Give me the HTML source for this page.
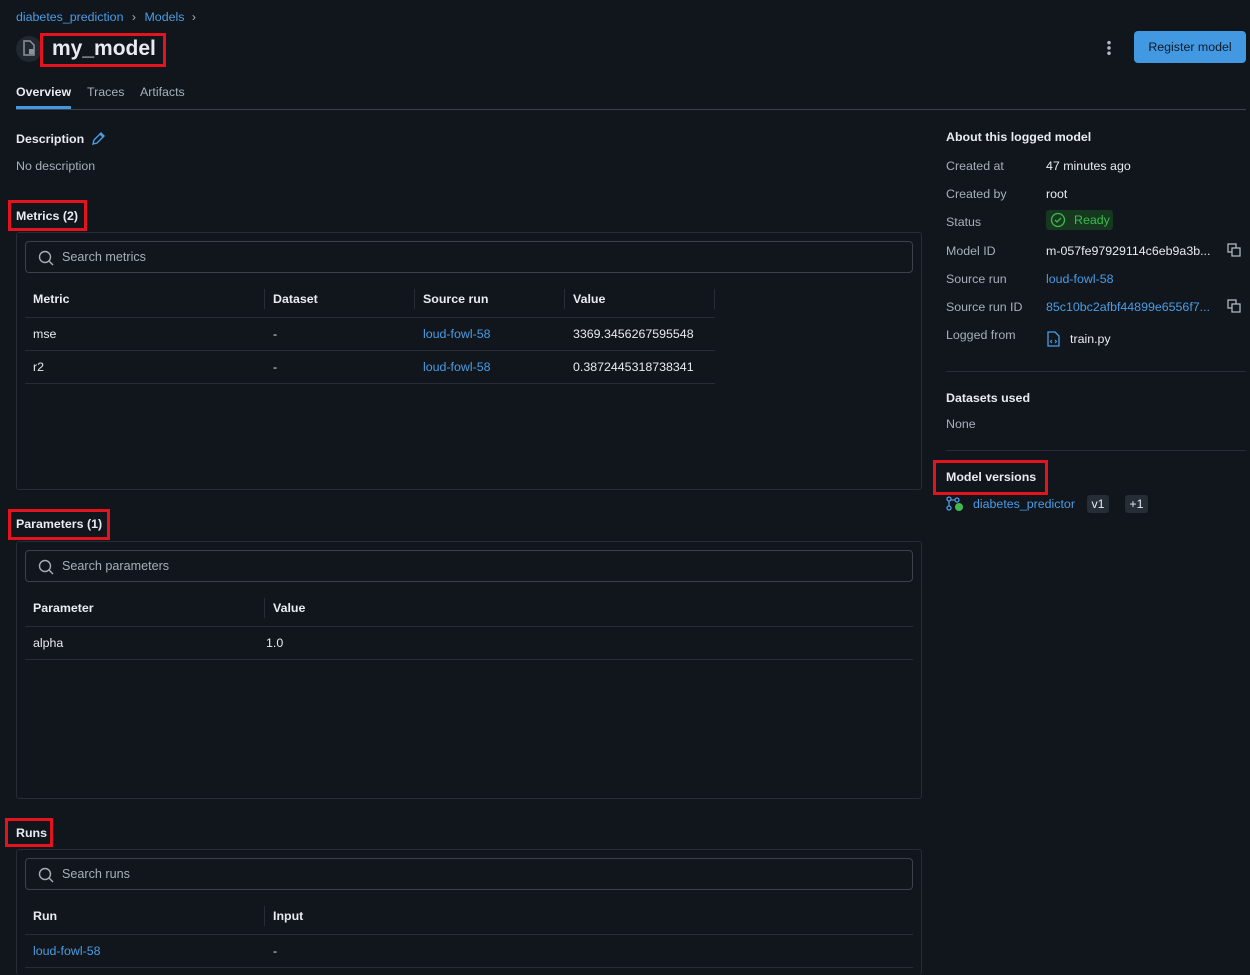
<!DOCTYPE html>
<html><head><meta charset="utf-8"><style>
*{box-sizing:border-box;margin:0;padding:0}
html,body{width:1250px;height:975px;overflow:hidden}
body{background:#11151c;color:#e8ecf0;font-family:"Liberation Sans",sans-serif;font-size:12.4px;position:relative}
.a{position:absolute;white-space:nowrap}
.link{color:#4a9de6}
.muted{color:#a7b0ba}
.b{font-weight:bold}
.red{position:absolute;border:3px solid #e3141d}
.box{position:absolute;border:1px solid #262d36;border-radius:3px}
.search{position:absolute;left:25px;width:888px;height:32px;border:1px solid #3a424c;border-radius:4px}
.search span{position:absolute;left:36px;top:8px;color:#a7b0ba;font-size:12.6px}
.search svg{position:absolute;left:12px;top:8px}
.hl{position:absolute;height:1px;background:#262d36}
.vd{position:absolute;width:1px;height:20px;background:#262d36}
</style></head><body>
<div class="a link" style="left:16px;top:10px">diabetes_prediction <span class="muted" style="margin:0 5px">›</span> Models <span class="muted" style="margin-left:4px">›</span></div>
<div class="a" style="left:16px;top:36px;width:26px;height:26px;border-radius:13px;background:#222830"></div>
<svg class="a" style="left:22px;top:40px" width="14" height="16" viewBox="0 0 14 16"><path d="M2 1h6l4 4v10H2z" fill="none" stroke="#8a939c" stroke-width="1.5"/><rect x="7" y="9" width="5" height="5" fill="#8a939c"/></svg>
<div class="red" style="left:40px;top:33px;width:126px;height:34px"></div>
<div class="a b" style="left:52px;top:37px;font-size:21px">my_model</div>
<div class="a" style="left:1107px;top:40px;width:4px;height:16px;background:radial-gradient(circle,#b0b8c0 1.6px,transparent 2px) 0 0/4px 5.3px"></div>
<div class="a" style="left:1134px;top:31px;width:112px;height:32px;background:#4299e1;border-radius:4px;color:#0d1a28;text-align:center;line-height:32px">Register model</div>
<div class="a b" style="left:16px;top:85px">Overview</div>
<div class="a" style="left:16px;top:106px;width:55px;height:3px;background:#4299e1"></div>
<div class="a muted" style="left:87px;top:85px">Traces</div>
<div class="a muted" style="left:140px;top:85px">Artifacts</div>
<div class="hl" style="left:16px;top:109px;width:1230px;background:#3a424c"></div>
<div class="a b" style="left:16px;top:132px">Description</div>
<svg class="a" style="left:91px;top:131px" width="15" height="15" viewBox="0 0 15 15"><path d="M2 13l1-4 7-7 3 3-7 7z M9 3l3 3" fill="none" stroke="#4a9de6" stroke-width="1.4"/></svg>
<div class="a muted" style="left:16px;top:159px">No description</div>

<div class="red" style="left:8px;top:200px;width:79px;height:31px"></div>
<div class="a b" style="left:16px;top:209px">Metrics (2)</div>
<div class="box" style="left:16px;top:232px;width:906px;height:258px"></div>
<div class="search" style="top:241px"><svg width="16" height="16" viewBox="0 0 16 16"><circle cx="7" cy="7" r="5.5" fill="none" stroke="#a7b0ba" stroke-width="1.4"/><path d="M11 11l4 4" stroke="#a7b0ba" stroke-width="1.4"/></svg><span>Search metrics</span></div>
<div class="a b" style="left:33px;top:292px">Metric</div><div class="vd" style="left:264px;top:289px"></div>
<div class="a b" style="left:273px;top:292px">Dataset</div><div class="vd" style="left:414px;top:289px"></div>
<div class="a b" style="left:423px;top:292px">Source run</div><div class="vd" style="left:564px;top:289px"></div>
<div class="a b" style="left:573px;top:292px">Value</div><div class="vd" style="left:714px;top:289px"></div>
<div class="hl" style="left:25px;top:317px;width:690px"></div>
<div class="a" style="left:33px;top:327px">mse</div><div class="a" style="left:273px;top:327px">-</div><div class="a link" style="left:423px;top:327px">loud-fowl-58</div><div class="a" style="left:573px;top:327px">3369.3456267595548</div>
<div class="hl" style="left:25px;top:350px;width:690px"></div>
<div class="a" style="left:33px;top:360px">r2</div><div class="a" style="left:273px;top:360px">-</div><div class="a link" style="left:423px;top:360px">loud-fowl-58</div><div class="a" style="left:573px;top:360px">0.3872445318738341</div>
<div class="hl" style="left:25px;top:383px;width:690px"></div>

<div class="red" style="left:8px;top:509px;width:102px;height:31px"></div>
<div class="a b" style="left:16px;top:517px">Parameters (1)</div>
<div class="box" style="left:16px;top:541px;width:906px;height:258px"></div>
<div class="search" style="top:550px"><svg width="16" height="16" viewBox="0 0 16 16"><circle cx="7" cy="7" r="5.5" fill="none" stroke="#a7b0ba" stroke-width="1.4"/><path d="M11 11l4 4" stroke="#a7b0ba" stroke-width="1.4"/></svg><span>Search parameters</span></div>
<div class="a b" style="left:33px;top:601px">Parameter</div><div class="vd" style="left:264px;top:598px"></div>
<div class="a b" style="left:273px;top:601px">Value</div>
<div class="hl" style="left:25px;top:626px;width:888px"></div>
<div class="a" style="left:33px;top:636px">alpha</div><div class="a" style="left:266px;top:636px">1.0</div>
<div class="hl" style="left:25px;top:659px;width:888px"></div>

<div class="red" style="left:5px;top:818px;width:48px;height:29px"></div>
<div class="a b" style="left:16px;top:826px">Runs</div>
<div class="box" style="left:16px;top:849px;width:906px;height:126px;border-bottom:none"></div>
<div class="search" style="top:858px"><svg width="16" height="16" viewBox="0 0 16 16"><circle cx="7" cy="7" r="5.5" fill="none" stroke="#a7b0ba" stroke-width="1.4"/><path d="M11 11l4 4" stroke="#a7b0ba" stroke-width="1.4"/></svg><span>Search runs</span></div>
<div class="a b" style="left:33px;top:909px">Run</div><div class="vd" style="left:264px;top:906px"></div>
<div class="a b" style="left:273px;top:909px">Input</div>
<div class="hl" style="left:25px;top:934px;width:888px"></div>
<div class="a link" style="left:33px;top:944px">loud-fowl-58</div><div class="a" style="left:273px;top:944px">-</div>
<div class="hl" style="left:25px;top:967px;width:888px"></div>

<div class="a b" style="left:946px;top:130px">About this logged model</div>
<div class="a muted" style="left:946px;top:159px">Created at</div><div class="a" style="left:1046px;top:159px">47 minutes ago</div>
<div class="a muted" style="left:946px;top:187px">Created by</div><div class="a" style="left:1046px;top:187px">root</div>
<div class="a muted" style="left:946px;top:215px">Status</div>
<div class="a" style="left:1046px;top:210px;width:67px;height:20px;background:#15381f;border-radius:3px;color:#3fb950;line-height:20px;padding-left:28px">Ready</div>
<svg class="a" style="left:1050px;top:212px" width="16" height="16" viewBox="0 0 16 16"><circle cx="8" cy="8" r="6.5" fill="none" stroke="#3fb950" stroke-width="1.3"/><path d="M5 8l2 2 4-4" fill="none" stroke="#3fb950" stroke-width="1.3"/></svg>
<div class="a muted" style="left:946px;top:244px">Model ID</div><div class="a" style="left:1046px;top:244px">m-057fe97929114c6eb9a3b...</div>
<div class="a muted" style="left:946px;top:272px">Source run</div><div class="a link" style="left:1046px;top:272px">loud-fowl-58</div>
<div class="a muted" style="left:946px;top:300px">Source run ID</div><div class="a link" style="left:1046px;top:300px">85c10bc2afbf44899e6556f7...</div>
<svg class="a" style="left:1227px;top:243px" width="14" height="14" viewBox="0 0 14 14"><rect x="1" y="1" width="8" height="8" fill="none" stroke="#b0b8c0" stroke-width="1.3"/><rect x="5" y="5" width="8" height="8" fill="#11151c" stroke="#b0b8c0" stroke-width="1.3"/></svg>
<svg class="a" style="left:1227px;top:299px" width="14" height="14" viewBox="0 0 14 14"><rect x="1" y="1" width="8" height="8" fill="none" stroke="#b0b8c0" stroke-width="1.3"/><rect x="5" y="5" width="8" height="8" fill="#11151c" stroke="#b0b8c0" stroke-width="1.3"/></svg>
<div class="a muted" style="left:946px;top:328px">Logged from</div>
<svg class="a" style="left:1047px;top:331px" width="13" height="16" viewBox="0 0 13 16"><path d="M1 1h7l4 4v10H1z" fill="none" stroke="#4a9de6" stroke-width="1.3"/><path d="M5 9l-1.5 1.5L5 12M8 9l1.5 1.5L8 12" fill="none" stroke="#4a9de6" stroke-width="1"/></svg>
<div class="a" style="left:1070px;top:332px">train.py</div>
<div class="hl" style="left:946px;top:371px;width:300px"></div>
<div class="a b" style="left:946px;top:391px">Datasets used</div>
<div class="a muted" style="left:946px;top:417px">None</div>
<div class="hl" style="left:946px;top:450px;width:300px"></div>
<div class="red" style="left:933px;top:460px;width:115px;height:35px"></div>
<div class="a b" style="left:946px;top:470px">Model versions</div>
<svg class="a" style="left:946px;top:496px" width="18" height="16" viewBox="0 0 18 16"><circle cx="3" cy="3" r="2" fill="none" stroke="#4a9de6" stroke-width="1.3"/><circle cx="3" cy="12" r="2" fill="none" stroke="#4a9de6" stroke-width="1.3"/><circle cx="11" cy="4" r="2" fill="none" stroke="#4a9de6" stroke-width="1.3"/><path d="M3 5v5M5 4h4" stroke="#4a9de6" stroke-width="1.3"/><circle cx="13" cy="11" r="4" fill="#3fb950"/></svg>
<div class="a link" style="left:973px;top:497px">diabetes_predictor</div>
<div class="a" style="left:1087px;top:495px;width:22px;height:18px;background:#262d36;border-radius:3px;text-align:center;line-height:18px">v1</div>
<div class="a" style="left:1125px;top:495px;width:23px;height:18px;background:#262d36;border-radius:3px;text-align:center;line-height:18px">+1</div>
</body></html>
